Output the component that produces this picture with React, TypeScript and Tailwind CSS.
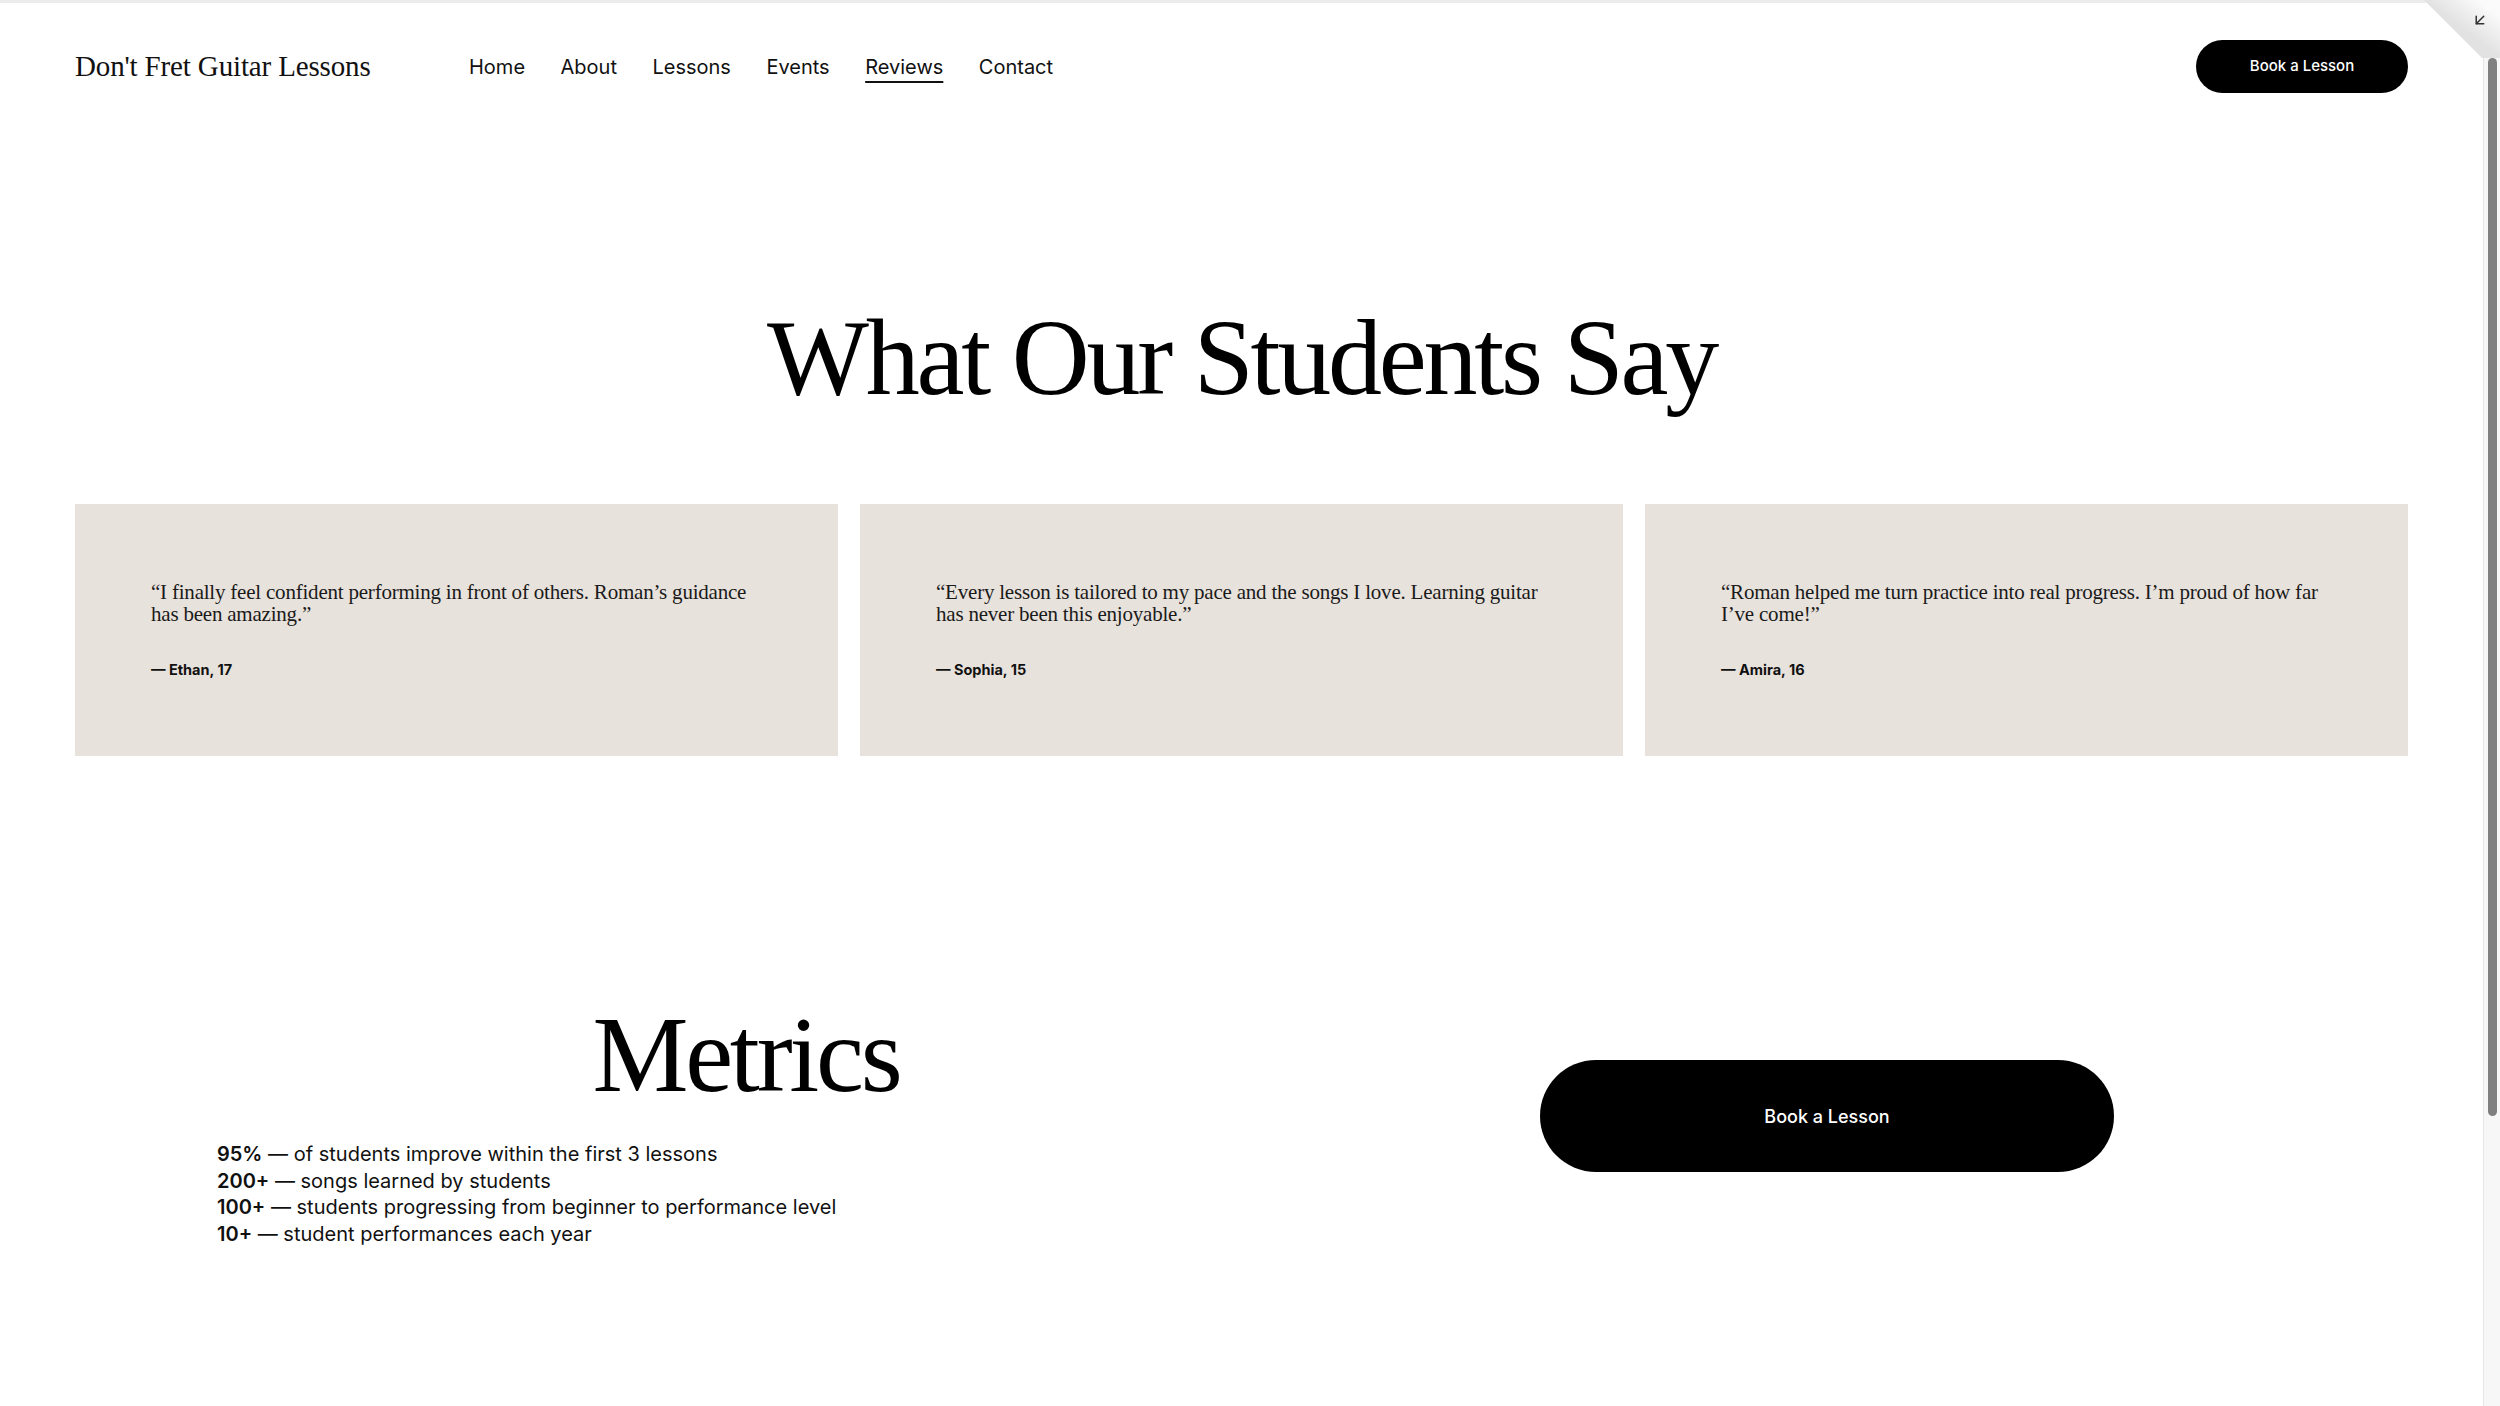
import React from 'react';
import { ArrowDownLeft } from 'lucide-react';

const serif = "font-['Liberation_Serif',_'Times_New_Roman',_serif]";
const sans = "font-['Inter',_'Liberation_Sans',_sans-serif]";

const navItems = ['Home', 'About', 'Lessons', 'Events', 'Reviews', 'Contact'];

const reviews = [
  { quote: '“I finally feel confident performing in front of others. Roman’s guidance has been amazing.”', who: '— Ethan, 17' },
  { quote: '“Every lesson is tailored to my pace and the songs I love. Learning guitar has never been this enjoyable.”', who: '— Sophia, 15' },
  { quote: '“Roman helped me turn practice into real progress. I’m proud of how far I’ve come!”', who: '— Amira, 16' },
];

const metrics = [
  { n: '95%', text: 'of students improve within the first 3 lessons' },
  { n: '200+', text: 'songs learned by students' },
  { n: '100+', text: 'students progressing from beginner to performance level' },
  { n: '10+', text: 'student performances each year' },
];

export default function App() {
  return (
    <div className="relative flex h-screen w-full overflow-hidden bg-white text-black">
      {/* page */}
      <div className="flex-1 min-w-0 border-t-[3px] border-[#ececec]">
        {/* Header */}
        <header className="flex h-[127px] items-center px-[75px]">
          <div className="w-[394px] shrink-0">
            <span className={`${serif} text-[29px] tracking-[-0.005em] text-[#111]`}>Don't Fret Guitar Lessons</span>
          </div>
          <nav className={`${sans} flex gap-[35.5px] text-[20px] text-[#111]`}>
            {navItems.map(item => (
              <a
                key={item}
                className={item === 'Reviews' ? 'underline decoration-[1.5px] underline-offset-[7px]' : ''}
              >
                {item}
              </a>
            ))}
          </nav>
          <div className="ml-auto">
            <button className={`${sans} h-[53px] w-[212px] rounded-full bg-black text-[15px] font-medium text-white`}>
              Book a Lesson
            </button>
          </div>
        </header>

        {/* Reviews */}
        <section className="px-[75px]">
          <h1 className={`${serif} mt-[174px] text-center text-[108px] leading-none tracking-[-0.03em]`}>
            What Our Students Say
          </h1>
          <div className="mt-[92px] grid grid-cols-3 gap-[22px]">
            {reviews.map(r => (
              <div key={r.who} className="h-[252px] bg-[#e8e2dc] px-[76px] pt-[77px]">
                <p className={`${serif} text-[21px] leading-[22px] tracking-[-0.01em] text-[#1a1a1a]`}>{r.quote}</p>
                <p className={`${sans} mt-[34px] text-[14.5px] font-bold text-[#111]`}>{r.who}</p>
              </div>
            ))}
          </div>
        </section>

        {/* Metrics */}
        <section className="mt-[245px] flex pl-[217px]">
          <div className="w-[1058px] shrink-0">
            <h2 className={`${serif} text-center text-[108px] leading-none tracking-[-0.03em]`}>Metrics</h2>
            <ul className={`${sans} mt-[32px] text-[20px] leading-[26.6px] text-[#111]`}>
              {metrics.map(m => (
                <li key={m.n}>
                  <span className="font-semibold">{m.n}</span> — {m.text}
                </li>
              ))}
            </ul>
          </div>
          <button
            className={`${sans} ml-[265px] mt-[59px] h-[112px] w-[574px] shrink-0 self-start rounded-full bg-black text-[18px] font-medium text-white`}
          >
            Book a Lesson
          </button>
        </section>
      </div>

      {/* scrollbar */}
      <div className="flex w-[17px] shrink-0 justify-center border-l border-[#e6e6e6] bg-[#f7f7f7] pt-[58px]">
        <div className="h-[1058px] w-[9px] rounded-full bg-[#808080]" />
      </div>

      {/* corner fold overlay */}
      <div className="pointer-events-none absolute right-0 top-0 h-[60px] w-[76px]">
        <svg width="76" height="60" viewBox="0 0 76 60" className="absolute inset-0">
          <defs>
            <linearGradient id="fold" x1="0" y1="0" x2="1" y2="-1" gradientUnits="objectBoundingBox">
              <stop offset="0" stopColor="#e2e2e2" />
              <stop offset="0.35" stopColor="#fafafa" />
              <stop offset="1" stopColor="#ffffff" />
            </linearGradient>
          </defs>
          <polygon points="0,0 76,0 76,58 58,58" fill="url(#fold)" />
        </svg>
        <ArrowDownLeft className="absolute right-[11px] top-[11px] h-[18px] w-[18px] text-[#333]" strokeWidth={2} />
      </div>
    </div>
  );
}
